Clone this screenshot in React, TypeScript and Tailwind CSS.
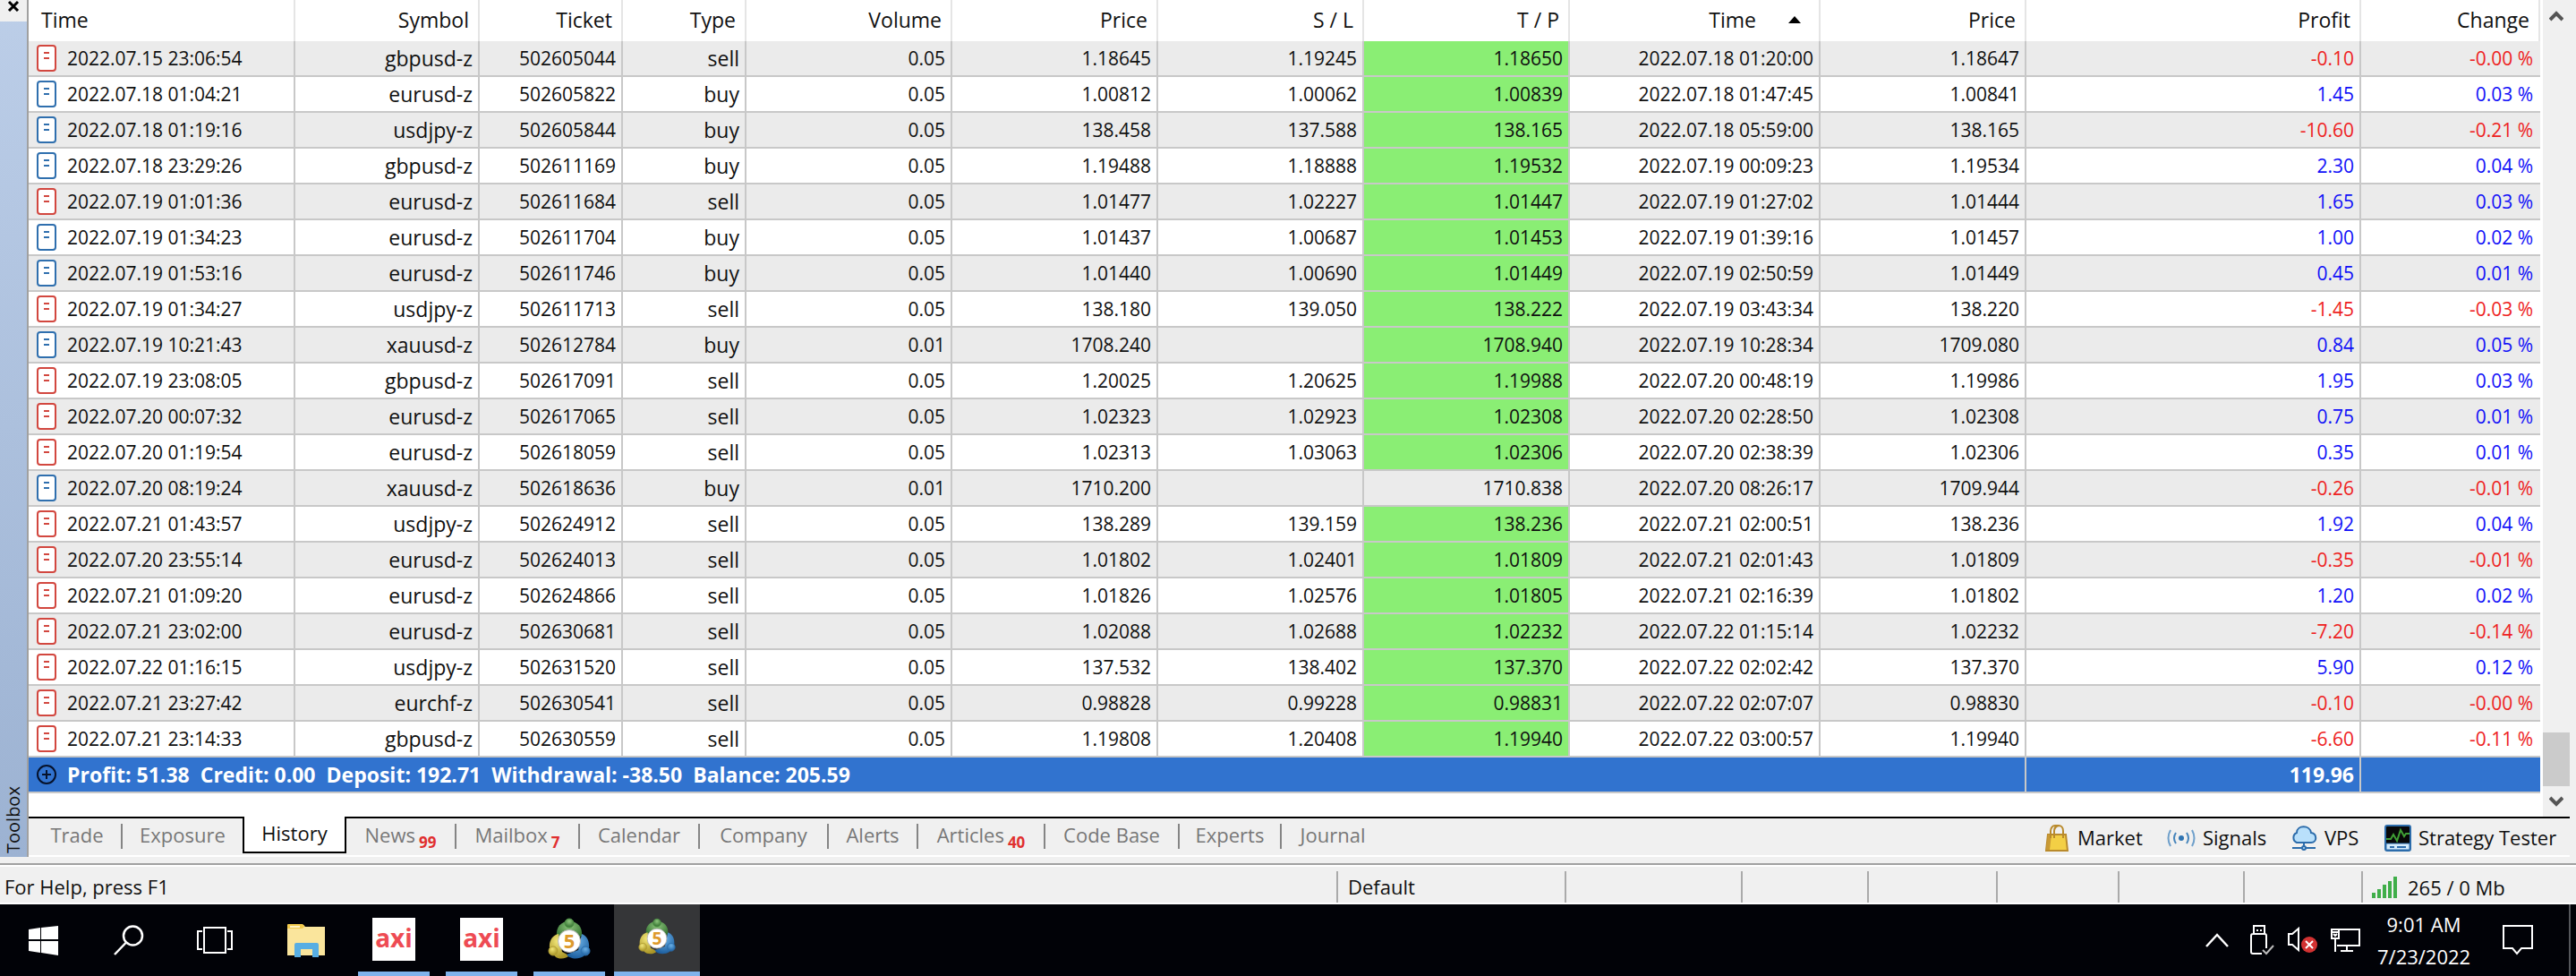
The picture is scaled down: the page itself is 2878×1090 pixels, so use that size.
import React from "react";

type Side = "buy" | "sell";

// time, symbol, ticket, type, volume, price, sl, tp, close time, close price, profit, change
type Deal = [string, string, string, Side, string, string, string, string, string, string, string, string];

const deals: Deal[] = [
  ["2022.07.15 23:06:54", "gbpusd-z", "502605044", "sell", "0.05", "1.18645", "1.19245", "1.18650", "2022.07.18 01:20:00", "1.18647", "-0.10", "-0.00 %"],
  ["2022.07.18 01:04:21", "eurusd-z", "502605822", "buy", "0.05", "1.00812", "1.00062", "1.00839", "2022.07.18 01:47:45", "1.00841", "1.45", "0.03 %"],
  ["2022.07.18 01:19:16", "usdjpy-z", "502605844", "buy", "0.05", "138.458", "137.588", "138.165", "2022.07.18 05:59:00", "138.165", "-10.60", "-0.21 %"],
  ["2022.07.18 23:29:26", "gbpusd-z", "502611169", "buy", "0.05", "1.19488", "1.18888", "1.19532", "2022.07.19 00:09:23", "1.19534", "2.30", "0.04 %"],
  ["2022.07.19 01:01:36", "eurusd-z", "502611684", "sell", "0.05", "1.01477", "1.02227", "1.01447", "2022.07.19 01:27:02", "1.01444", "1.65", "0.03 %"],
  ["2022.07.19 01:34:23", "eurusd-z", "502611704", "buy", "0.05", "1.01437", "1.00687", "1.01453", "2022.07.19 01:39:16", "1.01457", "1.00", "0.02 %"],
  ["2022.07.19 01:53:16", "eurusd-z", "502611746", "buy", "0.05", "1.01440", "1.00690", "1.01449", "2022.07.19 02:50:59", "1.01449", "0.45", "0.01 %"],
  ["2022.07.19 01:34:27", "usdjpy-z", "502611713", "sell", "0.05", "138.180", "139.050", "138.222", "2022.07.19 03:43:34", "138.220", "-1.45", "-0.03 %"],
  ["2022.07.19 10:21:43", "xauusd-z", "502612784", "buy", "0.01", "1708.240", "", "1708.940", "2022.07.19 10:28:34", "1709.080", "0.84", "0.05 %"],
  ["2022.07.19 23:08:05", "gbpusd-z", "502617091", "sell", "0.05", "1.20025", "1.20625", "1.19988", "2022.07.20 00:48:19", "1.19986", "1.95", "0.03 %"],
  ["2022.07.20 00:07:32", "eurusd-z", "502617065", "sell", "0.05", "1.02323", "1.02923", "1.02308", "2022.07.20 02:28:50", "1.02308", "0.75", "0.01 %"],
  ["2022.07.20 01:19:54", "eurusd-z", "502618059", "sell", "0.05", "1.02313", "1.03063", "1.02306", "2022.07.20 02:38:39", "1.02306", "0.35", "0.01 %"],
  ["2022.07.20 08:19:24", "xauusd-z", "502618636", "buy", "0.01", "1710.200", "", "1710.838", "2022.07.20 08:26:17", "1709.944", "-0.26", "-0.01 %"],
  ["2022.07.21 01:43:57", "usdjpy-z", "502624912", "sell", "0.05", "138.289", "139.159", "138.236", "2022.07.21 02:00:51", "138.236", "1.92", "0.04 %"],
  ["2022.07.20 23:55:14", "eurusd-z", "502624013", "sell", "0.05", "1.01802", "1.02401", "1.01809", "2022.07.21 02:01:43", "1.01809", "-0.35", "-0.01 %"],
  ["2022.07.21 01:09:20", "eurusd-z", "502624866", "sell", "0.05", "1.01826", "1.02576", "1.01805", "2022.07.21 02:16:39", "1.01802", "1.20", "0.02 %"],
  ["2022.07.21 23:02:00", "eurusd-z", "502630681", "sell", "0.05", "1.02088", "1.02688", "1.02232", "2022.07.22 01:15:14", "1.02232", "-7.20", "-0.14 %"],
  ["2022.07.22 01:16:15", "usdjpy-z", "502631520", "sell", "0.05", "137.532", "138.402", "137.370", "2022.07.22 02:02:42", "137.370", "5.90", "0.12 %"],
  ["2022.07.21 23:27:42", "eurchf-z", "502630541", "sell", "0.05", "0.98828", "0.99228", "0.98831", "2022.07.22 02:07:07", "0.98830", "-0.10", "-0.00 %"],
  ["2022.07.21 23:14:33", "gbpusd-z", "502630559", "sell", "0.05", "1.19808", "1.20408", "1.19940", "2022.07.22 03:00:57", "1.19940", "-6.60", "-0.11 %"],
];

// deals that were closed before reaching their take profit level
const openTargets = ["502618636"];

const columns = [
  { label: "Time", width: "w-[298px]" },
  { label: "Symbol", width: "w-[206px]" },
  { label: "Ticket", width: "w-[160px]" },
  { label: "Type", width: "w-[138px]" },
  { label: "Volume", width: "w-[230px]" },
  { label: "Price", width: "w-[230px]" },
  { label: "S / L", width: "w-[230px]" },
  { label: "T / P", width: "w-[230px]" },
  { label: "Time", width: "w-[280px]", sorted: true },
  { label: "Price", width: "w-[230px]" },
  { label: "Profit", width: "" },
  { label: "Change", width: "w-[200px]" },
];

const tabs = [
  { label: "Trade", width: "w-[100px]" },
  { label: "Exposure", width: "w-[134px]" },
  { label: "History", width: "w-[116px]", active: true },
  { label: "News", width: "w-[123px]", badge: "99" },
  { label: "Mailbox", width: "w-[138px]", badge: "7" },
  { label: "Calendar", width: "w-[134px]" },
  { label: "Company", width: "w-[144px]" },
  { label: "Alerts", width: "w-[100px]" },
  { label: "Articles", width: "w-[142px]", badge: "40" },
  { label: "Code Base", width: "w-[150px]" },
  { label: "Experts", width: "w-[114px]" },
  { label: "Journal", width: "w-[114px]" },
];

const statusPanes = ["w-[197px]", "w-[141px]", "w-[144px]", "w-[136px]", "w-[140px]", "w-[132px]"];

function DealIcon({ side }: { side: Side }) {
  const color = side === "sell" ? "#d2473f" : "#2f6fae";
  return (
    <svg className="h-[30px] w-[22px] shrink-0" viewBox="0 0 22 30" fill="none" stroke={color} strokeWidth="2">
      <rect x="1" y="1" width="20" height="28" rx="3" fill="#fff" />
      <path d="M8 9h6M8 15h6" />
    </svg>
  );
}

function MarketIcon() {
  return (
    <svg className="h-[30px] w-[26px]" viewBox="0 0 26 30" fill="none">
      <path d="M3 11h20l2 18H1z" fill="#f3cf45" stroke="#b98a2c" strokeWidth="2" />
      <path d="M3 11h4L5 28H1z" fill="#c99a35" />
      <path d="M6 15V7c0-3 2-6 5-6M10 15V7c0-8 10-8 10 0v8M11 1h4c-3 1-5 3-5 6" stroke="#b98a2c" strokeWidth="2" />
    </svg>
  );
}

function SignalsIcon() {
  return (
    <svg className="h-[20px] w-[32px]" viewBox="0 0 32 20" fill="none" stroke="#4584bb" strokeWidth="2">
      <circle cx="16" cy="10" r="3" fill="#2f74b2" stroke="none" />
      <path d="M10 4q-4 6 0 12M22 4q4 6 0 12" />
      <path d="M4 1q-5 9 0 18M28 1q5 9 0 18" stroke="#6fa0cb" />
    </svg>
  );
}

function VpsIcon() {
  return (
    <svg className="h-[28px] w-[30px]" viewBox="0 0 30 28" fill="none" stroke="#2c6cab" strokeWidth="2">
      <path d="M7 19a6 6 0 0 1 0-11c0-9 15-9 16 0 7 1 7 11 0 11z" fill="#b9e0fb" />
      <path d="M15 19v4M2 25h26" />
      <circle cx="15" cy="25" r="2" fill="#b9e0fb" />
    </svg>
  );
}

function TesterIcon() {
  return (
    <svg className="h-[30px] w-[30px]" viewBox="0 0 30 30" fill="none">
      <rect x="1" y="1" width="28" height="28" rx="2" fill="#080808" stroke="#2c6cab" strokeWidth="2" />
      <path d="M2 21h26v7H2z" fill="#d6ecfb" stroke="#2c6cab" />
      <path d="M6 25h5M14 25h10" stroke="#2c6cab" strokeWidth="2" />
      <path d="M2 16h5l3-5 4 7 4-12 4 7 2-3h4" stroke="#3f9e35" strokeWidth="2" />
    </svg>
  );
}

const tools = [
  { label: "Market", icon: <MarketIcon />, width: "w-[136px]", gap: "gap-[10px]" },
  { label: "Signals", icon: <SignalsIcon />, width: "w-[138px]", gap: "gap-2" },
  { label: "VPS", icon: <VpsIcon />, width: "w-[105px]", gap: "gap-2" },
  { label: "Strategy Tester", icon: <TesterIcon />, width: "w-[207px]", gap: "gap-2" },
];

function HistoryTable() {
  return (
    <table className="w-full table-fixed border-separate border-spacing-0 text-right text-[21px] whitespace-nowrap">
      <colgroup>
        {columns.map((c, i) => (
          <col key={i} className={c.width} />
        ))}
      </colgroup>
      <thead>
        <tr className="h-[46px] text-[23px]">
          {columns.map((c, i) => (
            <th
              key={i}
              scope="col"
              className={`border-r-2 border-[#e5e5e5] p-0 pb-[2px] font-normal leading-[44px] ${i === 0 ? "pl-[14px] text-left" : "pr-[10px]"}`}
            >
              {c.sorted ? (
                <span className="flex items-center justify-end gap-9 pr-[10px]">
                  {c.label}
                  <svg className="h-[8px] w-[14px]" viewBox="0 0 14 8">
                    <path d="M7 0l7 8H0z" />
                  </svg>
                </span>
              ) : (
                c.label
              )}
            </th>
          ))}
        </tr>
      </thead>
      <tbody>
        {deals.map((deal) => (
          <tr key={deal[2]} className="h-10 odd:bg-[#ebebeb]">
            {deal.map((value, i) => {
              let tone = "";
              if (i === 1 || i === 3) tone = "text-[23px]";
              if (i === 7 && !openTargets.includes(deal[2])) tone = "bg-[#8aee74]";
              if (i > 9) tone = value.startsWith("-") ? "text-[#ee2222]" : "text-[#1010f8]";
              return (
                <td
                  key={i}
                  className={`border-b-2 border-[#c8c8c8] p-0 leading-[38px] ${i === 11 ? "pr-[8px]" : "border-r-2 pr-[6px]"} ${tone}`}
                >
                  {i === 0 ? (
                    <span className="flex items-center gap-3 pl-[9px]">
                      <DealIcon side={deal[3]} />
                      {value}
                    </span>
                  ) : (
                    value
                  )}
                </td>
              );
            })}
          </tr>
        ))}
      </tbody>
      <tfoot>
        <tr className="h-10 bg-[#3173cf] text-[23px] font-bold text-white">
          <td colSpan={10} className="border-r-2 border-b-2 border-[#c8c8c8] p-0 leading-[38px]">
            <span className="flex items-center gap-3 pl-[9px]">
              <svg className="h-[22px] w-[22px]" viewBox="0 0 22 22" fill="none" stroke="#06122b" strokeWidth="2">
                <circle cx="11" cy="11" r="10" />
                <path d="M11 6v10M6 11h10" />
              </svg>
              <span className="flex gap-3">
                <span>Profit: 51.38</span>
                <span>Credit: 0.00</span>
                <span>Deposit: 192.71</span>
                <span>Withdrawal: -38.50</span>
                <span>Balance: 205.59</span>
              </span>
            </span>
          </td>
          <td className="border-r-2 border-b-2 border-[#c8c8c8] p-0 pr-[6px] leading-[38px]">119.96</td>
          <td className="border-b-2 border-[#c8c8c8] p-0" />
        </tr>
      </tfoot>
    </table>
  );
}

function ScrollBar() {
  return (
    <div className="ml-[3px] flex w-[30px] shrink-0 flex-col items-center justify-between bg-[#f0f0f0]">
      <button aria-label="Scroll up" className="flex h-8 w-full items-center justify-center pt-1">
        <svg className="h-[14px] w-[16px]" viewBox="0 0 16 14" fill="none" stroke="#555" strokeWidth="4">
          <path d="M1 11l7-7 7 7" />
        </svg>
      </button>
      <div className="flex w-full flex-col">
        <div className="h-[60px] bg-[#cbcbcb]" />
        <button aria-label="Scroll down" className="flex h-[34px] w-full items-center justify-center">
          <svg className="h-[14px] w-[16px]" viewBox="0 0 16 14" fill="none" stroke="#555" strokeWidth="4">
            <path d="M1 3l7 7 7-7" />
          </svg>
        </button>
      </div>
    </div>
  );
}

function TabBar() {
  return (
    <div className="flex h-[45px] justify-between border-b-2 border-white pl-[5px] shadow-[inset_0_2px_0_#000]">
      <div role="tablist" className="flex">
        {tabs.map((tab, i) => {
          if (tab.active) {
            return (
              <button
                key={tab.label}
                role="tab"
                aria-selected="true"
                className={`h-[41px] border-2 border-t-0 border-black bg-white pb-1 leading-[34px] ${tab.width}`}
              >
                {tab.label}
              </button>
            );
          }
          const divider = i !== 1 && i !== tabs.length - 1;
          return (
            <button
              key={tab.label}
              role="tab"
              aria-selected="false"
              className={`mt-[8px] flex h-[28px] items-center justify-center gap-1 pb-[3px] text-[#777] ${tab.width} ${divider ? "border-r-2 border-[#858585]" : ""}`}
            >
              {tab.label}
              {tab.badge && <span className="pt-4 text-[17px] leading-4 font-bold text-[#e02f2f]">{tab.badge}</span>}
            </button>
          );
        })}
      </div>
      <div className="flex items-center pt-1">
        {tools.map((tool) => (
          <button key={tool.label} className={`flex items-center whitespace-nowrap ${tool.width} ${tool.gap}`}>
            {tool.icon}
            {tool.label}
          </button>
        ))}
      </div>
    </div>
  );
}

function Toolbox() {
  return (
    <section className="flex">
      <div className="flex w-[30px] shrink-0 flex-col bg-gradient-to-b from-[#bccee8] to-[#9cb2d2]">
        <button aria-label="Close toolbox" className="flex h-6 items-start justify-center bg-[#f0f0f0]">
          <svg className="h-[13px] w-[14px]" viewBox="0 0 14 13" stroke="#000" strokeWidth="3">
            <path d="M2 2l10 10M12 2L2 12" />
          </svg>
        </button>
        <div className="flex flex-1 rotate-180 items-center pt-1 text-xl leading-[30px] [writing-mode:vertical-rl]">Toolbox</div>
      </div>
      <div className="flex min-w-0 flex-1 flex-col border-l-2 border-[#a0a0a0] bg-[#f0f0f0] pr-[7px]">
        <div className="flex bg-white">
          <div className="min-w-0 flex-1 pb-[26px]">
            <HistoryTable />
          </div>
          <ScrollBar />
        </div>
        <TabBar />
      </div>
    </section>
  );
}

function StatusBar() {
  return (
    <footer className="flex h-[46px] border-t-2 border-b-2 border-t-[#a0a0a0] border-b-white bg-[#f0f0f0] pt-[7px] leading-[34px] shadow-[inset_0_2px_0_#fff]">
      <div className="min-w-0 flex-1 pl-[5px]">For Help, press F1</div>
      <div className="w-[255px] border-l-2 border-[#aaa] pl-[11px]">Default</div>
      {statusPanes.map((width, i) => (
        <div key={i} className={`border-l-2 border-[#aaa] ${width}`} />
      ))}
      <div className="flex w-[240px] items-center gap-3 border-l-2 border-[#aaa] pl-[10px]">
        <svg className="h-[24px] w-[28px]" viewBox="0 0 28 24" fill="#3fae49">
          <path d="M0 18h4v6H0zM6 14h4v10H6zM12 9h4v15h-4zM18 5h4v19h-4zM24 0h4v24h-4z" />
        </svg>
        265 / 0 Mb
      </div>
    </footer>
  );
}

function MetaTraderIcon({ id, className }: { id: string; className: string }) {
  return (
    <svg className={className} viewBox="0 0 48 46">
      <defs>
        <radialGradient id={`${id}-green`} cx="0.5" cy="0.3" r="0.7">
          <stop offset="0" stopColor="#8cc47c" />
          <stop offset="1" stopColor="#2f6e2c" />
        </radialGradient>
        <radialGradient id={`${id}-gold`} cx="0.4" cy="0.3" r="0.7">
          <stop offset="0" stopColor="#f1e678" />
          <stop offset="1" stopColor="#aa9526" />
        </radialGradient>
        <radialGradient id={`${id}-blue`} cx="0.5" cy="0.3" r="0.7">
          <stop offset="0" stopColor="#6ab0e6" />
          <stop offset="1" stopColor="#1d5f9f" />
        </radialGradient>
      </defs>
      <path d="M10 20C9 10 15 4 24 4s15 6 14 16l-6 4H16z" fill={`url(#${id}-green)`} />
      <path d="M2 34c-1-9 4-15 10-16l4 20 8 4c-3 4-12 5-16 1z" fill={`url(#${id}-gold)`} />
      <path d="M46 34c1-9-3-14-8-16l-4 18-13 5c3 5 13 6 19 2z" fill={`url(#${id}-blue)`} />
      <circle cx="24" cy="6" r="5" fill={`url(#${id}-green)`} stroke="#4d8f45" />
      <circle cx="6" cy="37" r="5" fill={`url(#${id}-gold)`} stroke="#b3a035" />
      <circle cx="42" cy="37" r="5" fill={`url(#${id}-blue)`} stroke="#2c70b0" />
      <circle cx="24" cy="26" r="12.500" fill="#fff" stroke="#b5b5b5" />
      <text x="24" y="34" textAnchor="middle" fontSize="22" fontWeight="700" fill="#dd9a2c">5</text>
    </svg>
  );
}

function AxiIcon() {
  return (
    <span className="flex h-12 w-12 items-center justify-center bg-white pb-1 text-[28px] leading-none font-bold text-[#ee4b53]">
      axi
    </span>
  );
}

const apps = [
  { name: "Axi", icon: <AxiIcon />, active: false },
  { name: "Axi terminal", icon: <AxiIcon />, active: false },
  { name: "MetaTrader 5", icon: <MetaTraderIcon id="mt" className="h-[46px] w-[48px]" />, active: false },
  { name: "MetaTrader 5 terminal", icon: <MetaTraderIcon id="mt-active" className="h-[41px] w-[42px]" />, active: true },
];

function Taskbar() {
  return (
    <nav className="flex h-20 justify-between bg-[#010207] text-white">
      <div className="flex">
        <button aria-label="Start" className="flex w-24 items-center justify-center">
          <svg className="h-[33px] w-[33px]" viewBox="0 0 33 33" fill="#fff">
            <path d="M0 4l13-2v13H0zM14 2L33 0v15H14zM0 17h13v13L0 28zM14 17h19v16l-19-3z" />
          </svg>
        </button>
        <button aria-label="Search" className="flex w-24 items-center justify-center">
          <svg className="h-[34px] w-[34px]" viewBox="0 0 34 34" fill="none" stroke="#fff" strokeWidth="2.500">
            <circle cx="21.500" cy="12" r="10.500" />
            <path d="M14 19.500L1 33" />
          </svg>
        </button>
        <button aria-label="Task view" className="flex w-24 items-center justify-center">
          <svg className="h-[30px] w-[42px]" viewBox="0 0 42 30" fill="none" stroke="#fff" strokeWidth="2">
            <path d="M9 1h24v28H9zM7 5H2v20h5M35 5h5v20h-5" />
          </svg>
        </button>
        <button aria-label="File Explorer" className="ml-[6px] flex w-24 items-center justify-center">
          <svg className="h-[37px] w-[44px]" viewBox="0 0 44 37">
            <path d="M1 1h18l2 2h22v32H1z" fill="#fae59c" />
            <path d="M1 1q0-1 1-1h16q2 1 2 3l-2 2H1z" fill="#f3cb4c" />
            <path d="M4 2h11v2H4z" fill="#fff3c4" />
            <path d="M9 37V23q0-2 2-2h23q2 0 2 2v14h-7v-9H16v9z" fill="#58aee3" />
          </svg>
        </button>
        <div className="ml-[2px] flex gap-[2px]">
          {apps.map((app) => (
            <button
              key={app.name}
              aria-label={app.name}
              className={`flex w-24 flex-col items-center justify-between pt-[15px] ${app.active ? "bg-[#353638]" : ""}`}
            >
              {app.icon}
              <span className={`h-[5px] bg-[#7fb3ec] ${app.active ? "w-full" : "w-20"}`} />
            </button>
          ))}
        </div>
      </div>
      <div className="flex items-center">
        <button aria-label="Show hidden icons" className="mr-[24px]">
          <svg className="h-[16px] w-[26px]" viewBox="0 0 26 16" fill="none" stroke="#fff" strokeWidth="2.500">
            <path d="M1 15L13 2l12 13" />
          </svg>
        </button>
        <button aria-label="Eject media" className="mr-[15px]">
          <svg className="h-[34px] w-[27px]" viewBox="0 0 27 34" fill="none" stroke="#fff" strokeWidth="2">
            <path d="M4 10V1h12v9M7 6h2M11 6h2M13 32H3q-2 0-2-2V12q0-2 2-2h13q2 0 2 2v14" />
            <path d="M14 28l4 4 8-9" stroke="#bbb" />
          </svg>
        </button>
        <button aria-label="Volume muted" className="mr-[15px]">
          <svg className="h-[30px] w-[33px]" viewBox="0 0 33 30" fill="none" stroke="#fff" strokeWidth="2">
            <path d="M1 8h4l7-6v24l-7-6H1z" />
            <circle cx="24" cy="20" r="9" fill="#d23232" stroke="none" />
            <path d="M20 16l8 8M28 16l-8 8" />
          </svg>
        </button>
        <button aria-label="Network" className="mr-[19px]">
          <svg className="h-[28px] w-[33px]" viewBox="0 0 33 28" fill="none" stroke="#fff" strokeWidth="2">
            <path d="M9 2h23v18H7M1 2h8v10H1zM5 12v15M18 20v6M11 26h14M1 5h8M3 7l2 2 2-2" />
          </svg>
        </button>
        <button className="w-[104px] text-center text-[22px] leading-9">
          9:01 AM
          <br />
          7/23/2022
        </button>
        <button aria-label="Notifications" className="mr-[40px] ml-[36px]">
          <svg className="h-[34px] w-[34px]" viewBox="0 0 34 34" fill="none" stroke="#fff" strokeWidth="2">
            <path d="M1 1h32v25H21l-5 6-5-6H1z" />
          </svg>
        </button>
        <div className="mr-[6px] h-full w-[2px] bg-[#55575b]" />
      </div>
    </nav>
  );
}

export default function App() {
  return (
    <main className="bg-[#f0f0f0] font-['Open_Sans',sans-serif] text-[22px] text-[#101010]">
      <Toolbox />
      <div className="h-[7px] bg-[#f0f0f0]" />
      <StatusBar />
      <Taskbar />
    </main>
  );
}
